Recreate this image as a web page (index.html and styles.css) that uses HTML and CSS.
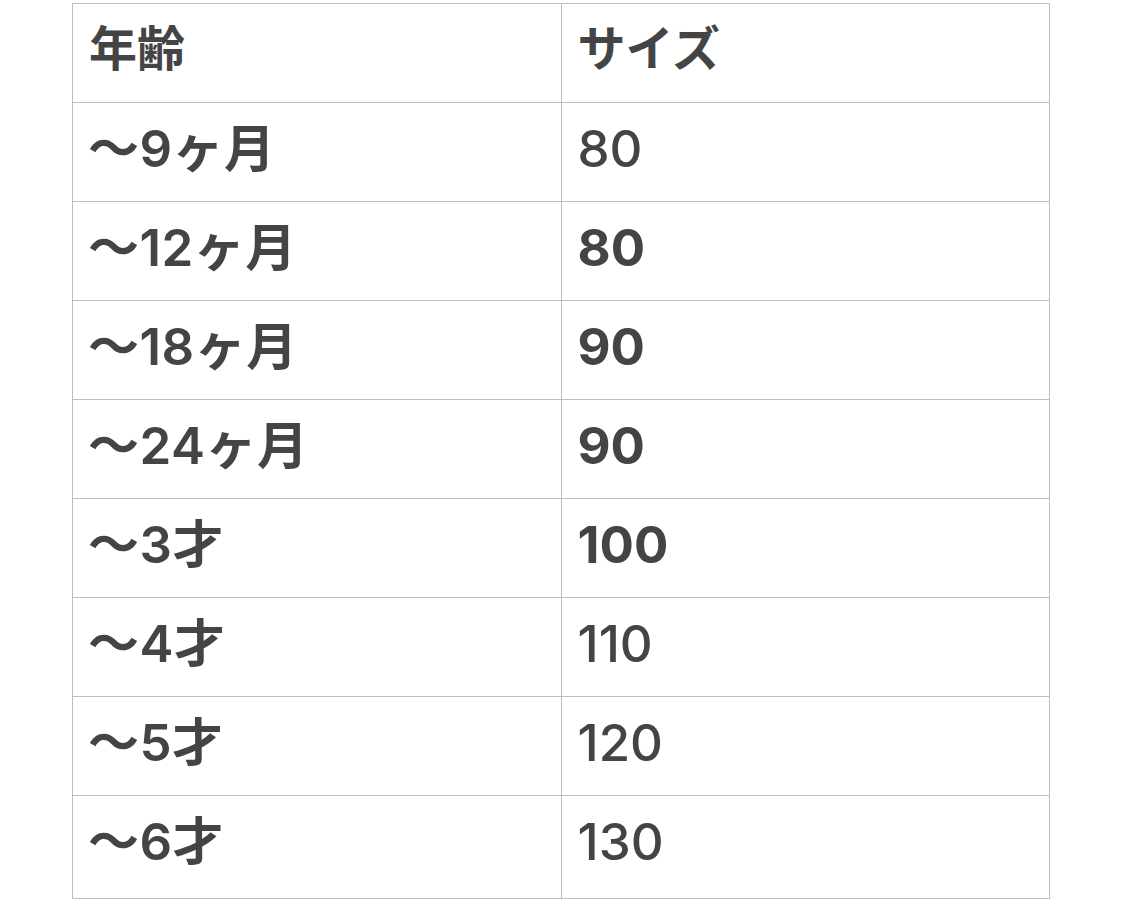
FILE: index.html
```html
<!DOCTYPE html>
<html lang="ja">
<head>
<meta charset="utf-8">
<link rel="stylesheet" href="styles.css">
</head>
<body>
<table class="size-table">
  <thead>
    <tr><th>年齢</th><th>サイズ</th></tr>
  </thead>
  <tbody>
    <tr><td class="age">〜9ヶ月</td><td>80</td></tr>
    <tr><td class="age">〜12ヶ月</td><td class="strong">80</td></tr>
    <tr><td class="age">〜18ヶ月</td><td class="strong">90</td></tr>
    <tr><td class="age">〜24ヶ月</td><td class="strong">90</td></tr>
    <tr><td class="age">〜3才</td><td class="strong">100</td></tr>
    <tr><td class="age">〜4才</td><td>110</td></tr>
    <tr><td class="age">〜5才</td><td>120</td></tr>
    <tr class="last"><td class="age">〜6才</td><td>130</td></tr>
  </tbody>
</table>
</body>
</html>
```

FILE: styles.css
```css
html, body {
  margin: 0;
  padding: 0;
  background: #ffffff;
}

body {
  font-family: Inter, "Noto Sans CJK JP", sans-serif;
  color: #444444;
}

.size-table {
  border-collapse: collapse;
  width: 978px;
  margin: 3px 0 0 72px;
  table-layout: fixed;
}

.size-table th,
.size-table td {
  border: 1px solid #bdbdbd;
  height: 99px;
  padding: 0 16px 8px;
  text-align: left;
  vertical-align: middle;
  font-size: 51px;
  line-height: 1;
  font-weight: 500;
  box-sizing: border-box;
}

.size-table th {
  font-family: "Noto Sans CJK JP", sans-serif;
  font-weight: 700;
  font-size: 48px;
  padding-bottom: 16px;
}

.size-table td.age {
  font-weight: 600;
  letter-spacing: 0.5px;
  padding-left: 15px;
}

.size-table td.strong {
  font-weight: 700;
}

.size-table tr.last td {
  height: 103px;
  padding-bottom: 12px;
}
```
